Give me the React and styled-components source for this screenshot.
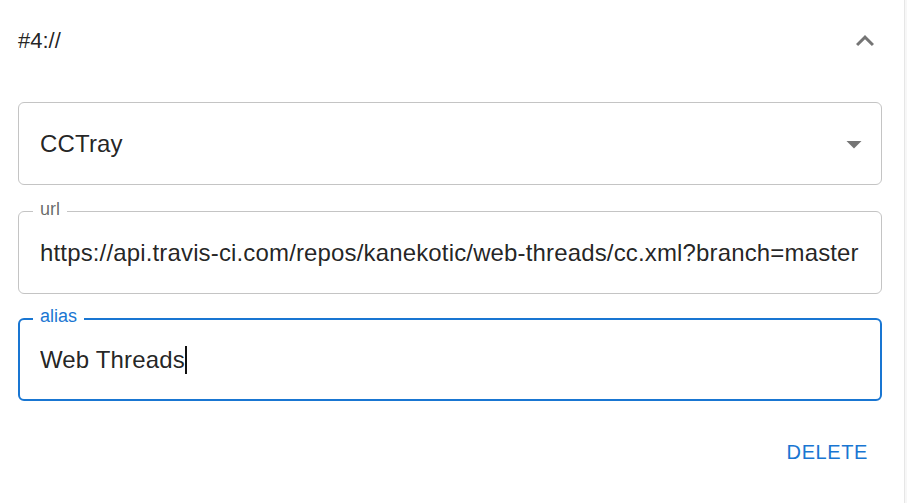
import styled, { createGlobalStyle } from "styled-components";

const URL_VALUE = "https://api.travis-ci.com/repos/kanekotic/web-threads/cc.xml?branch=master";

const GlobalStyle = createGlobalStyle`
  html, body {
    margin: 0;
    padding: 0;
    background: #f7f7f7;
  }
  body {
    font-family: "Liberation Sans", Arial, sans-serif;
    color: rgba(0, 0, 0, 0.87);
  }
`;

const ChevronUp = () => (
  <svg width="36" height="36" viewBox="0 0 24 24" fill="#757575">
    <path d="M7.41 15.41 12 10.83l4.59 4.58L18 14l-6-6-6 6z" />
  </svg>
);

const CaretDown = () => (
  <svg width="36" height="36" viewBox="0 0 24 24" fill="#757575">
    <path d="M7 10l5 5 5-5z" />
  </svg>
);

const App = () => {
  return (
    <>
      <GlobalStyle />
      <Card>
        <Header>
          <HeaderTitle>#4://</HeaderTitle>
          <IconBox>
            <ChevronUp />
          </IconBox>
        </Header>
        <Details>
          <Field $top="20px">
            <FieldValue>CCTray</FieldValue>
            <SelectIcon>
              <CaretDown />
            </SelectIcon>
          </Field>
          <Field $top="26px">
            <FieldLabel>url</FieldLabel>
            <FieldValue>{URL_VALUE}</FieldValue>
          </Field>
          <Field $top="24px" $focused>
            <FieldLabel $focused>alias</FieldLabel>
            <FieldValue>
              Web Threads<Caret />
            </FieldValue>
          </Field>
        </Details>
        <Actions>
          <TextButton>Delete</TextButton>
        </Actions>
      </Card>
    </>
  );
};

const Card = styled.div`
  width: 905px;
  height: 503px;
  box-sizing: border-box;
  padding: 0 22px 0 18px;
  background: #ffffff;
  border-right: 1px solid #e6e6e6;
`;

const Header = styled.div`
  height: 82px;
  display: flex;
  align-items: center;
  justify-content: space-between;
`;

const HeaderTitle = styled.span`
  font-size: 22px;
  color: rgba(0, 0, 0, 0.87);
`;

const IconBox = styled.div`
  display: flex;
  width: 36px;
  height: 36px;
  margin-right: -1px;
`;

const Details = styled.div`
  display: flex;
  flex-direction: column;
`;

const Field = styled.div`
  position: relative;
  height: 83px;
  box-sizing: border-box;
  margin-top: ${(p) => p.$top};
  border: ${(p) => (p.$focused ? "2px solid #1976d2" : "1px solid #c4c4c4")};
  border-radius: 6px;
  display: flex;
  align-items: center;
  padding: 0 ${(p) => (p.$focused ? "20px" : "21px")};
`;

const FieldValue = styled.div`
  flex: 1;
  min-width: 0;
  font-size: 24px;
  letter-spacing: 0.15px;
  white-space: nowrap;
  overflow: hidden;
  color: rgba(0, 0, 0, 0.87);
  display: flex;
  align-items: center;
`;

const Caret = styled.span`
  display: inline-block;
  width: 2px;
  height: 28px;
  background: #111;
`;

const SelectIcon = styled.div`
  position: absolute;
  right: 9px;
  top: 50%;
  margin-top: -18px;
  display: flex;
`;

const FieldLabel = styled.span`
  position: absolute;
  left: ${(p) => (p.$focused ? "13px" : "14px")};
  top: ${(p) => (p.$focused ? "-13px" : "-12px")};
  padding: 0 7px;
  background: #ffffff;
  font-size: 18px;
  line-height: 18px;
  color: ${(p) => (p.$focused ? "#1976d2" : "rgba(0, 0, 0, 0.6)")};
`;

const Actions = styled.div`
  display: flex;
  justify-content: flex-end;
  padding-top: 24px;
`;

const TextButton = styled.button`
  border: none;
  background: none;
  font-family: "Liberation Sans", Arial, sans-serif;
  font-size: 20px;
  letter-spacing: 0.6px;
  text-transform: uppercase;
  color: #1976d2;
  height: 54px;
  padding: 0 12px;
  margin-right: 2px;
  cursor: pointer;
`;

export default App;
